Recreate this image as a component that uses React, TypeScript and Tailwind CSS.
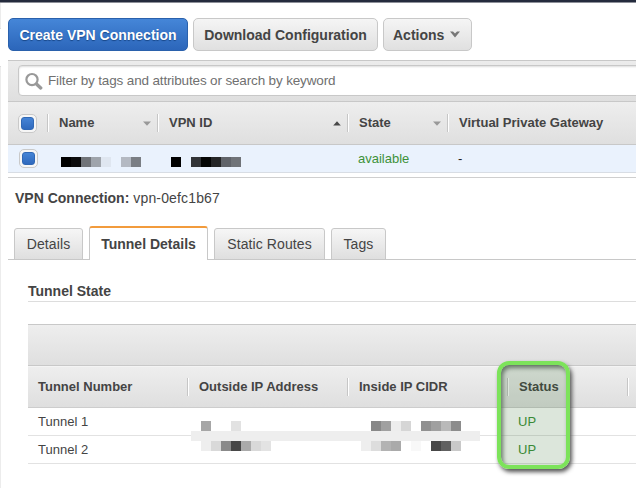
import type { ReactNode } from 'react';

const grey = 'bg-linear-to-b from-[#eeeeee] to-[#dfdfdf]';

function Mosaic({ colors, className = '' }: { colors: string[]; className?: string }) {
  return (
    <div className={`flex h-[10px] ${className}`}>
      {colors.map((c, i) => (
        <span key={i} className="h-[10px] w-[10px]" style={{ backgroundColor: c }} />
      ))}
    </div>
  );
}

function Divider({ className = '' }: { className?: string }) {
  return <span className={`h-[18px] w-[2px] shrink-0 border-l border-[#c6c6c6] bg-white ${className}`} />;
}

function Check() {
  return (
    <span className="flex h-[19px] w-[19px] items-center justify-center rounded-[5px] border border-[#c9c9c9] bg-[#f6f6f6]">
      <span className="h-[13px] w-[13px] rounded-[3px] border border-[#3068b5] bg-linear-to-b from-[#4584d6] to-[#2f69bd]" />
    </span>
  );
}

function Sort({ up = false }: { up?: boolean }) {
  return (
    <svg width="8" height="5" viewBox="0 0 8 5" className="shrink-0">
      {up ? <path d="M0.2 4.4 4 0.2 7.8 4.4Z" fill="#484848" /> : <path d="M0 .6H8L4 4.8Z" fill="#999" />}
    </svg>
  );
}

function Column({ label, sort, className }: { label: string; sort?: ReactNode; className: string }) {
  return (
    <div className={`flex h-[42px] shrink-0 items-center ${className}`}>
      <Divider />
      <span className="grow pl-[10px] leading-[16px] whitespace-nowrap">{label}</span>
      {sort}
    </div>
  );
}

function Tab({ children, className }: { children: string; className: string }) {
  return (
    <div
      className={`flex h-[32px] items-center justify-center rounded-t-[3px] border border-[#c8c8c8] bg-linear-to-b from-[#f6f6f6] to-[#dfdfdf] tracking-[0.1px] whitespace-nowrap ${className}`}
    >
      {children}
    </div>
  );
}

function TunnelRow({ name }: { name: string }) {
  return (
    <div className="flex h-[28px] items-center border-b border-[#e2e2e2] pl-[10px]">
      <span className="w-[480px]">{name}</span>
      <span className="text-[#3d9139]">UP</span>
    </div>
  );
}

export default function App() {
  return (
    <div className="relative flex h-[488px] w-[636px] flex-col overflow-hidden bg-white font-['Liberation_Sans',Arial,sans-serif] text-[14px] text-[#444]">
      <div className="h-[3px] shrink-0 border-b border-[#8d9099] bg-[#242b3d]" />
      <div className="flex min-h-0 grow">
        <div className="flex w-[8px] shrink-0 flex-col">
          <div className="h-[25px] w-px bg-[#ececec]" />
          <div className="h-[39px] w-px border-y border-[#dcdcdc] bg-white" />
          <div className="w-px grow bg-[#ececec]" />
        </div>
        <main className="flex w-[628px] shrink-0 flex-col">
          <div className="flex h-[57px] shrink-0 gap-[5px] pt-[15px] leading-[16px] font-bold">
            <button className="h-[33px] w-[180px] rounded-[5px] border border-[#2a61ac] bg-linear-to-b from-[#4586d8] to-[#2c66ba] pt-px whitespace-nowrap text-white text-shadow-[0_1px_1px_#174687]">
              Create VPN Connection
            </button>
            <button className="h-[33px] w-[185px] rounded-[5px] border border-[#c8c8c8] bg-linear-to-b from-[#f5f5f5] to-[#e0e0e0] pt-px whitespace-nowrap">
              Download Configuration
            </button>
            <button className="flex h-[33px] w-[89px] items-center rounded-[5px] border border-[#c8c8c8] bg-linear-to-b from-[#f5f5f5] to-[#e0e0e0] pt-px pl-[9px]">
              Actions
              <svg width="10" height="7" viewBox="0 0 10 7" className="mb-[2px] ml-[6px]">
                <path d="M0 .5H3L5 2.5 7 .5H10L5 6.5Z" fill="#777" />
              </svg>
            </button>
          </div>

          <div className="flex h-[42px] shrink-0 border-y border-[#c8c8c8] bg-linear-to-b from-[#ececec] to-[#dfdfdf] pt-[4px] pl-[10px]">
            <div className="flex h-[31px] w-[640px] shrink-0 items-center rounded-l-[4px] border border-[#c8c8c8] bg-white pl-[6px] text-[13.5px] text-[#707070] shadow-[inset_0_1px_2px_#ddd]">
              <svg width="18" height="18" viewBox="0 0 18 18" fill="none" stroke="#999">
                <circle cx="7" cy="7.6" r="5.6" strokeWidth="2.2" />
                <path d="m11.7 12.2 4 3.7" strokeWidth="3.4" strokeLinecap="round" />
              </svg>
              <span className="pt-[2px] pl-[5px] tracking-[-0.15px] whitespace-nowrap">
                Filter by tags and attributes or search by keyword
              </span>
            </div>
          </div>

          <div className={`flex h-[43px] shrink-0 border-b border-[#c8c8c8] text-[13px] font-bold ${grey}`}>
            <div className="flex w-[39px] shrink-0 items-center pl-[10px]">
              <Check />
            </div>
            <Column label="Name" className="w-[110px] pr-[6px]" sort={<Sort />} />
            <Column label="VPN ID" className="w-[190px] pr-[6px]" sort={<Sort up />} />
            <Column label="State" className="w-[100px] pr-[6px]" sort={<Sort />} />
            <Column label="Virtual Private Gateway" className="w-[189px]" />
          </div>
          <div className="flex h-[28px] shrink-0 border-b border-[#d8dde4] bg-[#eaf2fd] text-[13px]">
            <div className="w-[53px] shrink-0 pt-[4px] pl-[11px]">
              <Check />
            </div>
            <Mosaic className="mt-[12px] w-[110px]" colors={['#000', '#0c0c0d', '#717479', '#9fa4ab', '#dfe6f0', 'transparent', '#b4b9c2', '#7a7e84']} />
            <Mosaic className="mt-[12px] w-[187px]" colors={['#000', 'transparent', '#323437', '#050605', '#252627', '#606369', '#707378']} />
            <span className="w-[100px] pt-[5px] leading-[18px] text-[#3d9139]">available</span>
            <span className="pt-[5px] leading-[18px] text-[#222]">-</span>
          </div>
          <div className="mt-[4px] h-px shrink-0 bg-[#cfcfcf]" />

          <div className="flex h-[48px] shrink-0 gap-[4px] pt-[12px] pl-[7px] leading-[16px]">
            <span className="font-bold">VPN Connection:</span>
            <span className="tracking-[0.15px]">vpn-0efc1b67</span>
          </div>

          <div className="flex h-[34px] shrink-0 items-end gap-[6px] bg-[linear-gradient(#c8c8c8,#c8c8c8)] bg-[length:100%_1px] bg-bottom bg-no-repeat pl-[6px]">
            <Tab className="w-[69px]">Details</Tab>
            <div className="flex h-[34px] w-[119px] items-center justify-center rounded-t-[3px] border-x border-t-2 border-x-[#c8c8c8] border-t-[#f29b3c] bg-white pt-px font-bold whitespace-nowrap">
              Tunnel Details
            </div>
            <Tab className="w-[111px]">Static Routes</Tab>
            <Tab className="w-[55px]">Tags</Tab>
          </div>

          <section className="flex flex-col pl-[20px]">
            <h2 className="h-[42px] border-b border-[#dddddd] pt-[23px] leading-[16px] font-bold">Tunnel State</h2>
            <div className="mt-[22px] w-[608px] text-[13px]">
              <div className={`h-[42px] border-y border-[#c8c8c8] ${grey}`} />
              <div className={`flex h-[42px] items-center border-t border-b border-t-[#f4f4f4] border-b-[#cdcdcd] pl-[10px] font-bold ${grey}`}>
                <span className="w-[149px] shrink-0">Tunnel Number</span>
                <Column label="Outside IP Address" className="w-[160px]" />
                <Column label="Inside IP CIDR" className="w-[160px]" />
                <Column label="Status" className="w-[120px]" />
                <Divider />
              </div>
              <TunnelRow name="Tunnel 1" />
              <TunnelRow name="Tunnel 2" />
            </div>
          </section>
        </main>
      </div>

      {/* Redacted addresses laid over the tunnel rows */}
      <div className="absolute top-[431px] left-[191px] h-[10px] w-[289px] bg-[#eeeeee]" />
      <Mosaic className="absolute top-[421px] left-[201px]" colors={['#a6a6a6', '#fff', '#fff', '#e2e2e2']} />
      <Mosaic className="absolute top-[441px] left-[201px]" colors={['#eee', '#d9d9d9', '#8a8a8a', '#474747', '#aaa', '#d9d9d9', '#e3e3e3']} />
      <Mosaic className="absolute top-[421px] left-[371px]" colors={['#888', '#a0a0a0', '#ededed', '#d6d6d6', '#fff', '#919191', '#a0a0a0', '#b9b9b9', '#8c8c8c']} />
      <Mosaic className="absolute top-[441px] left-[361px]" colors={['#eee', '#ddd', '#b3b3b3', '#aaa', '#fff', '#f8f8f8', '#fff', '#474747', '#606060', '#c9c9c9']} />

      {/* Callout around the status column */}
      <div className="absolute top-[361px] left-[497px] h-[108px] w-[73px] rounded-[12px] border-4 border-[#7ce35a] bg-[#2f6d2a]/17 shadow-[2px_3px_4px_#555,inset_2px_3px_4px_#667766]" />
    </div>
  );
}
